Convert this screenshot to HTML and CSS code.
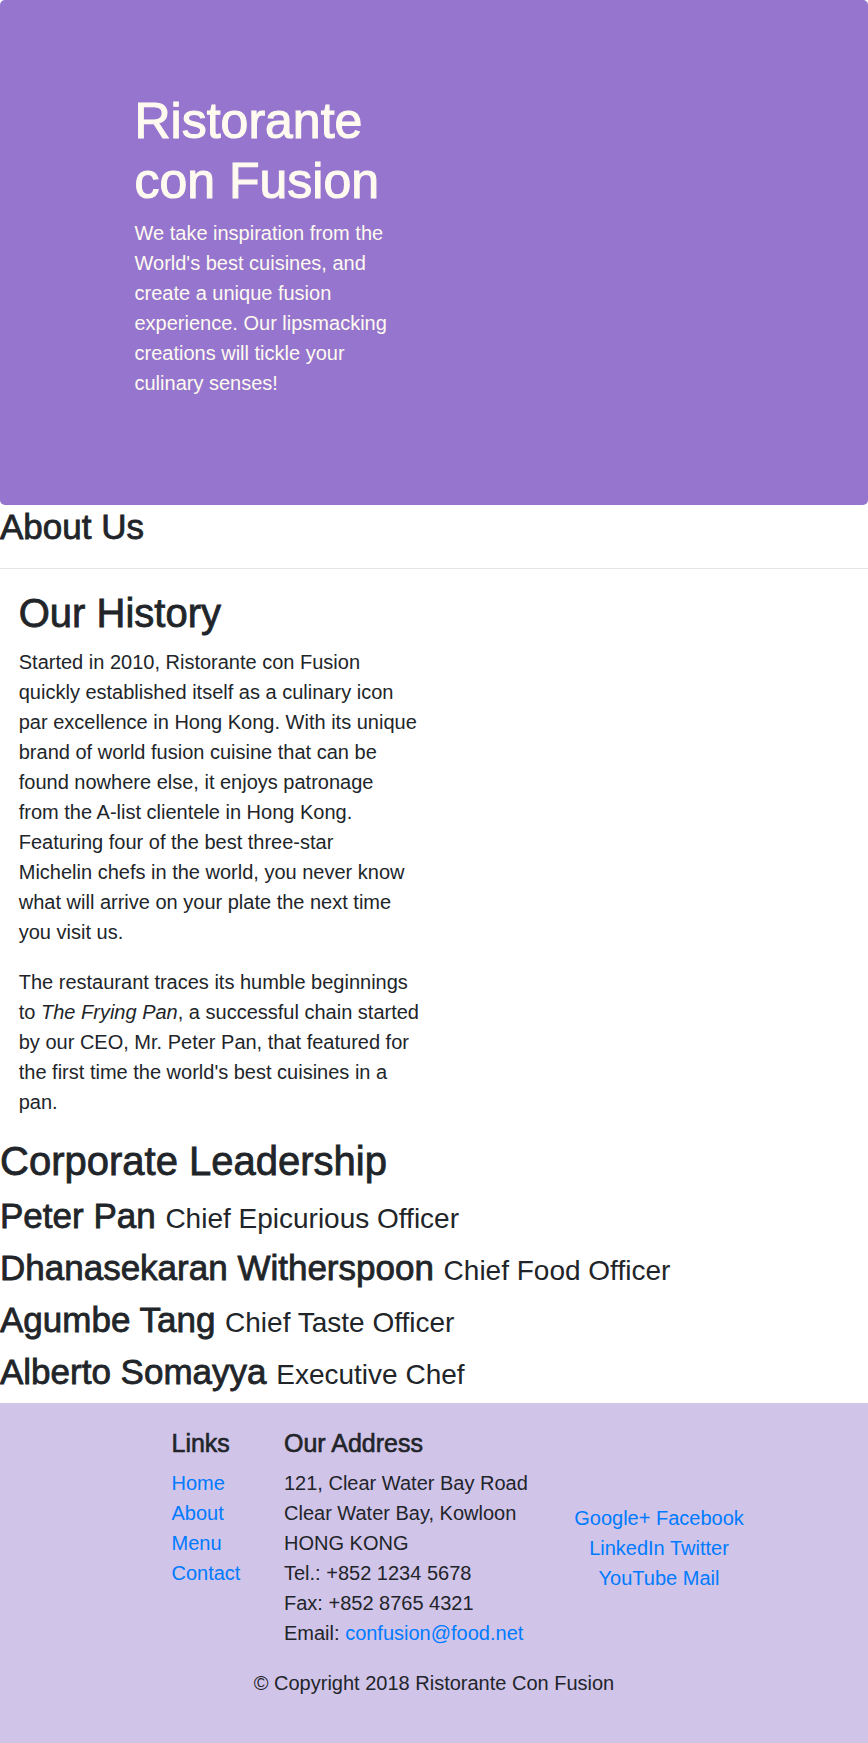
FILE: index.html
```html
<!DOCTYPE html>
<html lang="en">
<head>
<meta charset="utf-8">
<title>Ristorante con Fusion - About Us</title>
<link rel="stylesheet" href="styles.css">
</head>
<body>
<header class="hero">
  <div class="hero-text">
    <h1 class="hero-title">Ristorante<br>con Fusion</h1>
    <p class="hero-lead">We take inspiration from the<br>World's best cuisines, and<br>create a unique fusion<br>experience. Our lipsmacking<br>creations will tickle your<br>culinary senses!</p>
  </div>
</header>
<main>
  <section class="about">
    <h3 class="about-title">About Us</h3>
    <hr class="divider">
  </section>
  <section class="history">
    <h2 class="section-title">Our History</h2>
    <p class="text">Started in 2010, Ristorante con Fusion<br>quickly established itself as a culinary icon<br>par excellence in Hong Kong. With its unique<br>brand of world fusion cuisine that can be<br>found nowhere else, it enjoys patronage<br>from the A-list clientele in Hong Kong.<br>Featuring four of the best three-star<br>Michelin chefs in the world, you never know<br>what will arrive on your plate the next time<br>you visit us.</p>
    <p class="text">The restaurant traces its humble beginnings<br>to <em>The Frying Pan</em>, a successful chain started<br>by our CEO, Mr. Peter Pan, that featured for<br>the first time the world's best cuisines in a<br>pan.</p>
  </section>
  <section class="leadership">
    <h2 class="section-title">Corporate Leadership</h2>
    <h3 class="leader">Peter Pan <small class="role">Chief Epicurious Officer</small></h3>
    <h3 class="leader">Dhanasekaran Witherspoon <small class="role">Chief Food Officer</small></h3>
    <h3 class="leader">Agumbe Tang <small class="role">Chief Taste Officer</small></h3>
    <h3 class="leader">Alberto Somayya <small class="role">Executive Chef</small></h3>
  </section>
</main>
<footer class="footer">
  <div class="footer-row">
    <div class="col-links">
      <h5 class="footer-title">Links</h5>
      <ul class="link-list">
        <li><a href="#">Home</a></li>
        <li><a href="#">About</a></li>
        <li><a href="#">Menu</a></li>
        <li><a href="#">Contact</a></li>
      </ul>
    </div>
    <div class="col-address">
      <h5 class="footer-title">Our Address</h5>
      <address class="address">121, Clear Water Bay Road<br>Clear Water Bay, Kowloon<br>HONG KONG<br>Tel.: +852 1234 5678<br>Fax: +852 8765 4321<br>Email: <a href="#">confusion@food.net</a></address>
    </div>
    <div class="col-social">
      <div class="social-line"><a href="#">Google+</a> <a href="#">Facebook</a></div>
      <div class="social-line"><a href="#">LinkedIn</a> <a href="#">Twitter</a></div>
      <div class="social-line"><a href="#">YouTube</a> <a href="#">Mail</a></div>
    </div>
  </div>
  <div class="copyright-row">
    <p class="copyright">© Copyright 2018 Ristorante Con Fusion</p>
  </div>
</footer>
</body>
</html>
```
FILE: styles.css
```css
html, body {
  margin: 0;
  padding: 0;
}
body {
  font-family: "Liberation Sans", Arial, sans-serif;
  font-size: 20px;
  line-height: 30px;
  color: #212529;
  background: #ffffff;
}
a {
  color: #007bff;
  text-decoration: none;
}
h1, h2, h3, h5 {
  font-weight: 400;
  -webkit-text-stroke: 0.8px currentColor;
  margin: 0 0 10px 0;
}

/* Hero */
.hero {
  background: #9575cd;
  color: #fffaf0;
  border-radius: 5px;
  padding: 87.5px 0 87.5px 134.5px;
}
.hero-text {
  width: 281px;
}
.hero-title {
  font-size: 50px;
  line-height: 60px;
  padding-top: 3px;
  margin-bottom: 7px;
  -webkit-text-stroke: 1.1px currentColor;
}
.hero-lead {
  margin: 0 0 20px 0;
}

/* About */
.about-title {
  font-size: 35px;
  line-height: 42px;
  padding-top: 1px;
  margin-bottom: 0;
}
.divider {
  border: 0;
  border-top: 1.25px solid rgba(0, 0, 0, 0.1);
  margin: 20px 0;
  height: 0;
}

/* History */
.history {
  padding: 0 18.75px;
  max-width: 430px;
}
.section-title {
  font-size: 40px;
  line-height: 48px;
}
.text {
  margin: 0 0 20px 0;
}

/* Leadership */
.leader {
  font-size: 35px;
  line-height: 1.2;
  white-space: nowrap;
}
.role {
  font-size: 80%;
  font-weight: 400;
  -webkit-text-stroke: 0;
}

/* Footer */
.footer {
  background: #d1c4e9;
  padding: 25px 0;
}
.footer-row {
  width: 675px;
  margin: 0 auto;
  display: flex;
  justify-content: center;
}
.col-links {
  margin-left: 56.25px;
  width: 112.5px;
  padding: 0 18.75px;
  box-sizing: border-box;
}
.col-address {
  width: 281.25px;
  padding: 0 18.75px;
  box-sizing: border-box;
}
.col-social {
  width: 225px;
  padding: 0 18.75px;
  box-sizing: border-box;
  align-self: center;
  text-align: center;
}
.footer-title {
  font-size: 25px;
  line-height: 30px;
  -webkit-text-stroke: 0.6px currentColor;
}
.link-list {
  list-style: none;
  margin: 0 0 20px 0;
  padding: 0;
}
.address {
  font-style: normal;
  white-space: nowrap;
  margin: 0 0 20px 0;
}
.copyright-row {
  display: flex;
  justify-content: center;
}
.copyright {
  margin: 0 0 20px 0;
}
```
